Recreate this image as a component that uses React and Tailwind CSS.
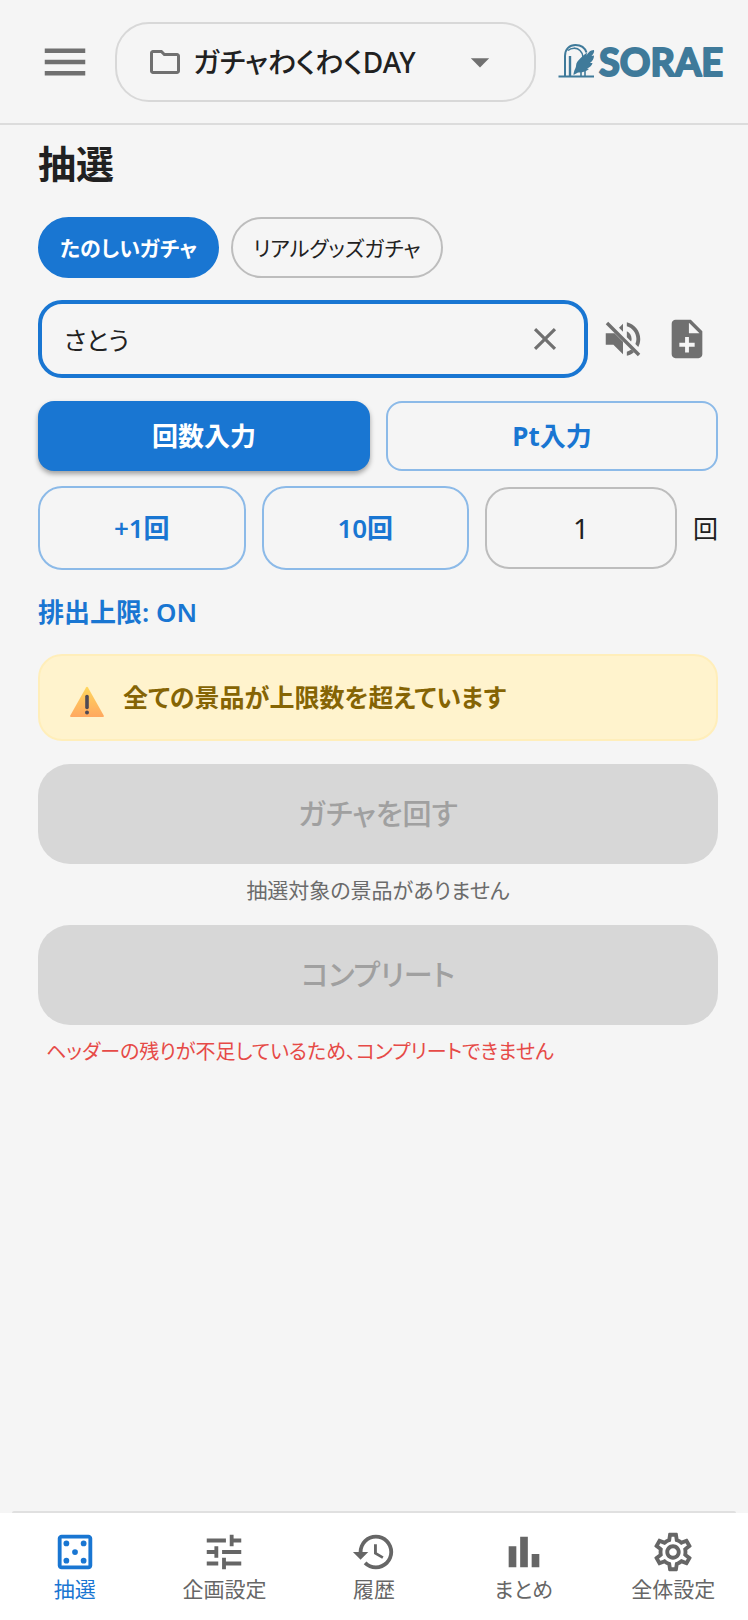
import React, { useState } from "react";
import {
  MdMenu,
  MdOutlineFolder,
  MdArrowDropDown,
  MdClose,
  MdNoteAdd,
  MdOutlineCasino,
  MdTune,
  MdHistory,
  MdBarChart,
  MdOutlineSettings,
} from "react-icons/md";

const PROJECTS = ["ガチャわくわくDAY"];
const GACHAS = ["たのしいガチャ", "リアルグッズガチャ"];

const NAV_ITEMS = [
  { key: "draw", label: "抽選", icon: MdOutlineCasino },
  { key: "plan", label: "企画設定", icon: MdTune },
  { key: "history", label: "履歴", icon: MdHistory },
  { key: "summary", label: "まとめ", icon: MdBarChart },
  { key: "settings", label: "全体設定", icon: MdOutlineSettings },
];

const Logo = () => (
  <svg width="168" height="56" viewBox="0 -8 168 56" fill="none" className="text-[#3f7a9a]">
    <path d="M0.500 34.500H36" stroke="currentColor" strokeWidth="2" />
    <path
      d="M7 34V14C7 7 11.500 3 17.500 3C23 3 27 6 28.500 10.500"
      stroke="currentColor"
      strokeWidth="2"
    />
    <path d="M12 34V14" stroke="currentColor" strokeWidth="2.400" />
    <path
      d="M10 8.500C13 5.500 19 5.300 22 8.500C24 10.500 25 12.500 25 15"
      stroke="currentColor"
      strokeWidth="1.600"
    />
    {/* feather */}
    <path
      d="M36 8C32 8 30 11 28.500 13.500L29 10.500C25 13.500 22 16.500 19.500 19.500C17.500 22 18.500 24 17.500 26C16 29 15.500 31 15.500 33L20 30.500C24 31 28 29.500 31 27L29 26.500C32 25.500 34 23.500 34.500 21L32 21C34.500 19 36 16.500 36 13.500L33.500 14C35.500 12 36.500 10 36 8Z"
      fill="currentColor"
    />
    <path d="M23 28V34M27 28V34" stroke="currentColor" strokeWidth="1.600" />
    <text
      x="41"
      y="34"
      fill="currentColor"
      stroke="currentColor"
      strokeWidth="2"
      strokeLinejoin="round"
      className="font-['Lato'] text-[38px] font-bold"
    >
      SORAE
    </text>
  </svg>
);

const VolumeOffIcon = () => (
  <svg width="46" height="46" viewBox="0 0 24 24" fill="currentColor" aria-hidden="true">
    <path d="M3 9v6h4l5 5v-6.600L7.600 9zM12 4 9.900 6.100 12 8.200zM14 7.970v3.100l2.200 2.200c.2-.4.3-.8.3-1.270 0-1.770-1.020-3.290-2.500-4.030z" />
    <path d="M14 3.230v2.060c2.890.86 5 3.540 5 6.710 0 .94-.2 1.820-.54 2.640l1.510 1.510C20.630 14.910 21 13.500 21 12c0-4.280-2.990-7.860-7-8.770zM14 18.710v2.060c1.380-.31 2.630-.95 3.690-1.810l-1.430-1.430c-.67.520-1.430.93-2.260 1.180z" />
    <path d="M4.270 3 3 4.270 19.730 21 21 19.730z" />
  </svg>
);

const WarningIcon = () => (
  <svg width="36" height="32" viewBox="0 0 36 32" aria-hidden="true">
    <defs>
      <linearGradient id="warn" x1="0" y1="0" x2="0" y2="1">
        <stop offset="0" stopColor="#ffd65c" />
        <stop offset="1" stopColor="#ffa860" />
      </linearGradient>
    </defs>
    <path
      d="M17 1.500Q18 0 19 1.500L34.700 29.500Q35.300 31 34 31H2Q.7 31 1.300 29.500Z"
      fill="url(#warn)"
    />
    <path d="M18 10.500V21.500" stroke="#4f4a55" strokeWidth="3.600" strokeLinecap="round" />
    <circle cx="18" cy="26.500" r="2" fill="#4f4a55" />
  </svg>
);

const GachaChip = ({ label, active, onClick }) => (
  <button
    type="button"
    onClick={onClick}
    aria-pressed={active}
    className={`h-[61px] rounded-full border-2 px-5 text-[21px] leading-8 ${
      active
        ? "border-[#1976d2] bg-[#1976d2] font-bold text-white"
        : "border-[#bdbdbd] text-[#212121]"
    }`}
  >
    {label}
  </button>
);

const ModeButton = ({ label, active, onClick }) => (
  <button
    type="button"
    onClick={onClick}
    aria-pressed={active}
    className={`h-[70px] rounded-2xl text-[26px] leading-8 font-bold ${
      active
        ? "bg-[#1976d2] text-white shadow-[0_3px_5px_rgba(0,0,0,0.35)]"
        : "border-2 border-[#8cbae8] text-[#1976d2]"
    }`}
  >
    {label}
  </button>
);

const CountButton = ({ label, onClick }) => (
  <button
    type="button"
    onClick={onClick}
    className="h-[84px] flex-1 rounded-3xl border-2 border-[#8cbae8] text-[26px] leading-8 font-semibold text-[#1976d2]"
  >
    {label}
  </button>
);

const ActionButton = ({ label }) => (
  <button
    type="button"
    disabled
    className="h-[100px] w-full rounded-[32px] bg-[#d7d7d7] text-[29px] leading-10 font-medium text-[#a0a0a0]"
  >
    {label}
  </button>
);

const NavItem = ({ item, active, onClick }) => {
  const Icon = item.icon;
  return (
    <button
      type="button"
      onClick={onClick}
      aria-current={active ? "page" : undefined}
      className={`flex flex-1 flex-col items-center pt-4 ${
        active ? "text-[#1976d2]" : "text-[#666666]"
      }`}
    >
      <Icon size={46} />
      <span className="text-[21px] leading-7">{item.label}</span>
    </button>
  );
};

export default function App() {
  const [project, setProject] = useState(PROJECTS[0]);
  const [gacha, setGacha] = useState(GACHAS[0]);
  const [userName, setUserName] = useState("さとう");
  const [mode, setMode] = useState("count");
  const [count, setCount] = useState("1");
  const [view, setView] = useState("draw");

  return (
    <div className="flex min-h-screen flex-col bg-[#f5f5f5] font-['Noto_Sans','Noto_Sans_CJK_JP',sans-serif] text-[#212121] [font-feature-settings:'palt']">
      <header className="flex h-[125px] items-center border-b-2 border-[#dcdcdc] pr-[22px] pl-[38px]">
        <button type="button" aria-label="メニュー" className="text-[#707070]">
          <MdMenu size={54} />
        </button>
        <label className="ml-[23px] flex h-20 flex-1 items-center rounded-[34px] border-2 border-[#d8d8d8] pr-8 pl-[30px]">
          <MdOutlineFolder size={36} className="shrink-0 text-[#707070]" />
          <select
            aria-label="企画"
            value={project}
            onChange={(e) => setProject(e.target.value)}
            className="ml-2.5 h-12 min-w-0 flex-1 appearance-none bg-transparent text-[28px] font-medium outline-none"
          >
            {PROJECTS.map((p) => (
              <option key={p}>{p}</option>
            ))}
          </select>
          <MdArrowDropDown size={44} className="shrink-0 text-[#707070]" />
        </label>
        <div className="ml-[22px] shrink-0">
          <Logo />
        </div>
      </header>

      <main className="flex-1 pr-[30px] pl-[38px]">
        <h1 className="mt-3.5 text-[38px] leading-12 font-bold">抽選</h1>

        <div className="mt-[30px] flex gap-3">
          {GACHAS.map((g) => (
            <GachaChip key={g} label={g} active={gacha === g} onClick={() => setGacha(g)} />
          ))}
        </div>

        <div className="mt-[22px] flex items-center">
          <div className="flex h-[78px] flex-1 items-center rounded-3xl border-4 border-[#1976d2] pr-5 pl-[22px]">
            <input
              aria-label="ユーザー名"
              value={userName}
              onChange={(e) => setUserName(e.target.value)}
              className="h-12 min-w-0 flex-1 bg-transparent text-[25px] outline-none"
            />
            <button
              type="button"
              aria-label="クリア"
              onClick={() => setUserName("")}
              className="text-[#707070]"
            >
              <MdClose size={38} />
            </button>
          </div>
          <button type="button" aria-label="ミュート" className="ml-3 text-[#707070]">
            <VolumeOffIcon />
          </button>
          <button type="button" aria-label="メモを追加" className="mr-2 ml-[18px] text-[#707070]">
            <MdNoteAdd size={46} />
          </button>
        </div>

        <div className="mt-[23px] grid grid-cols-2 gap-4">
          <ModeButton
            label="回数入力"
            active={mode === "count"}
            onClick={() => setMode("count")}
          />
          <ModeButton label="Pt入力" active={mode === "pt"} onClick={() => setMode("pt")} />
        </div>

        <div className="mt-[15px] flex items-center gap-4">
          <CountButton label="+1回" onClick={() => setCount(String(Number(count) + 1))} />
          <CountButton label="10回" onClick={() => setCount("10")} />
          <label className="flex items-center gap-4 text-[25px] leading-8">
            <input
              inputMode="numeric"
              value={count}
              onChange={(e) => setCount(e.target.value)}
              className="h-[82px] w-48 rounded-3xl border-2 border-[#bdbdbd] bg-transparent text-center text-[28px] outline-none"
            />
            回
          </label>
        </div>

        <button
          type="button"
          className="mt-[22px] block h-10 text-[26px] leading-10 font-semibold text-[#1976d2]"
        >
          排出上限: ON
        </button>

        <div
          role="alert"
          className="mt-[22px] flex h-[87px] items-center gap-[18px] rounded-3xl border-2 border-[#ffeeba] bg-[#fff3cd] px-[29px] text-[25px] font-semibold text-[#856404]"
        >
          <span className="mt-2">
            <WarningIcon />
          </span>
          全ての景品が上限数を超えています
        </div>

        <div className="mt-[23px]">
          <ActionButton label="ガチャを回す" />
        </div>
        <p className="mt-1.5 mb-[15px] text-center text-[21px] leading-10 text-[#6b6b6b]">
          抽選対象の景品がありません
        </p>
        <ActionButton label="コンプリート" />
        <p className="mt-[7px] px-2 text-[20px] leading-10 text-[#e64a47]">
          ヘッダーの残りが不足しているため、コンプリートできません
        </p>
      </main>

      <nav className="sticky bottom-0 flex h-[107px] bg-white before:absolute before:inset-x-3 before:-top-0.5 before:h-0.5 before:rounded-t-full before:bg-[#e0e0e0]">
        {NAV_ITEMS.map((item) => (
          <NavItem
            key={item.key}
            item={item}
            active={view === item.key}
            onClick={() => setView(item.key)}
          />
        ))}
      </nav>
    </div>
  );
}
